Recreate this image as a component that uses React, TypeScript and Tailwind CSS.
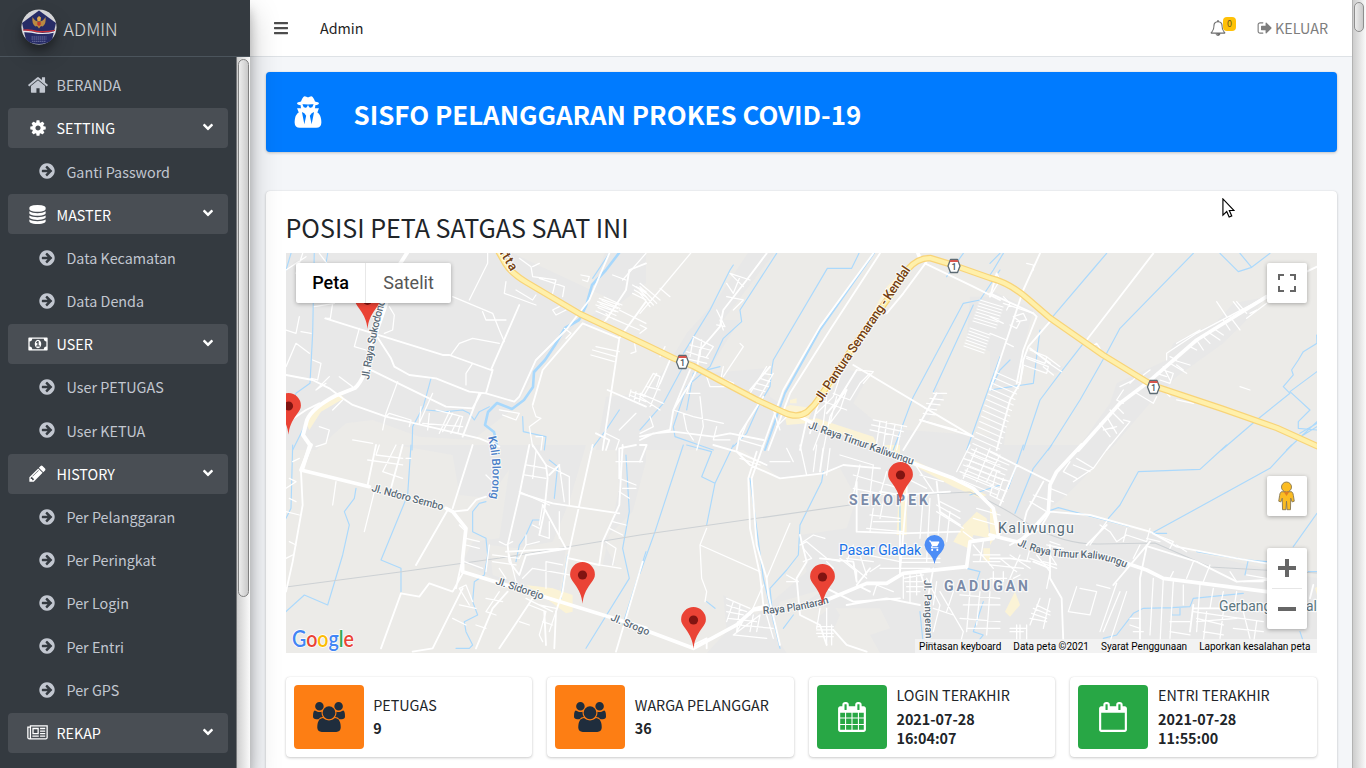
import React from "react";
import { FaAngleDown, FaBars } from "react-icons/fa";

const CALENDAR_FRAME =
  "m384-64v1280q0 52-38 90t-90 38h-1408q-52 0-90-38t-38-90v-1280q0-52 38-90t90-38h128v-96q0-66 47-113t113-47h64q66 0 113 47t47 113v96h384v-96q0-66 47-113t113-47h64q66 0 113 47t47 113v96h128q52 0 90 38t38 90z";

const ICONS = {
  home: "M1472 992v480q0 26-19 45t-45 19h-384v-384h-256v384h-384q-26 0-45-19t-19-45v-480q0-1 .5-3t.5-3l575-474 575 474q1 2 1 6zm223-69l-62 74q-8 9-21 11h-3q-13 0-21-7l-692-577-692 577q-12 8-24 7-13-2-21-11l-62-74q-8-10-7-23.5t11-21.5l719-599q32-26 76-26t76 26l244 204v-195q0-14 9-23t23-9h192q14 0 23 9t9 23v408l219 182q10 8 11 21.5t-7 23.5z",
  cog: "M1152 896q0-106-75-181t-181-75-181 75-75 181 75 181 181 75 181-75 75-181zm512-109v222q0 12-8 23t-20 13l-185 28q-19 54-39 91 35 50 107 138 10 12 10 25t-9 23q-27 37-99 108t-94 71q-12 0-26-9l-138-108q-44 23-91 38-16 136-29 186-7 28-36 28h-222q-14 0-24.5-8.5t-11.5-21.5l-28-184q-49-16-90-37l-141 107q-10 9-25 9-14 0-25-11-126-114-165-168-7-10-7-23 0-12 8-23 15-21 51-66.5t54-70.5q-27-50-41-99l-183-27q-13-2-21-12.5t-8-23.5v-222q0-12 8-23t19-13l186-28q14-46 39-92-40-57-107-138-10-12-10-24 0-10 9-23 26-36 98.5-107.5t94.5-71.5q13 0 26 10l138 107q44-23 91-38 16-136 29-186 7-28 36-28h222q14 0 24.5 8.5t11.5 21.5l28 184q49 16 90 37l142-107q9-9 24-9 13 0 25 10 129 119 165 170 7 8 7 22 0 12-8 23-15 21-51 66.5t-54 70.5q26 50 41 98l183 28q13 2 21 12.5t8 23.5z",
  database:
    "M896 768q237 0 443-43t325-127v170q0 69-103 128t-280 93.5-385 34.5-385-34.5-280-93.5-103-128v-170q119 84 325 127t443 43zm0 768q237 0 443-43t325-127v170q0 69-103 128t-280 93.5-385 34.5-385-34.5-280-93.5-103-128v-170q119 84 325 127t443 43zm0-384q237 0 443-43t325-127v170q0 69-103 128t-280 93.5-385 34.5-385-34.5-280-93.5-103-128v-170q119 84 325 127t443 43zm0-1152q208 0 385 34.5t280 93.5 103 128v128q0 69-103 128t-280 93.5-385 34.5-385-34.5-280-93.5-103-128v-128q0-69 103-128t280-93.5 385-34.5z",
  money:
    "M768 1152h384v-96h-128v-448h-114l-148 137 77 80q42-37 55-57h2v288h-128v96zm512-256q0 70-21 142t-59.5 134-101.5 101-138 39-138-39-101.5-101-59.5-134-21-142 21-142 59.5-134 101.5-101 138-39 138 39 101.5 101 59.5 134 21 142zm512 256v-512q-106 0-181-75t-75-181h-1152q0 106-75 181t-181 75v512q106 0 181 75t75 181h1152q0-106 75-181t181-75zm128-832v1152q0 26-19 45t-45 19h-1792q-26 0-45-19t-19-45v-1152q0-26 19-45t45-19h1792q26 0 45 19t19 45z",
  pencil:
    "M491 1536l91-91-235-235-91 91v107h128v128h107zm523-928q0-22-22-22-10 0-17 7l-542 542q-7 7-7 17 0 22 22 22 10 0 17-7l542-542q7-7 7-17zm-54-192l416 416-832 832h-416v-416zm683 96q0 53-37 90l-166 166-416-416 166-165q36-38 90-38 53 0 91 38l235 234q37 39 37 91z",
  newspaper:
    "M1024 512h-384v384h384v-384zm128 640v128h-640v-128h640zm0-768v640h-640v-640h640zm640 768v128h-512v-128h512zm0-256v128h-512v-128h512zm0-256v128h-512v-128h512zm0-256v128h-512v-128h512zm-1536 960v-960h-128v960q0 26 19 45t45 19 45-19 19-45zm1664 0v-1088h-1536v1088q0 33-11 64h1483q26 0 45-19t19-45zm128-1216v1216q0 80-56 136t-136 56h-1664q-80 0-136-56t-56-136v-1088h256v-128h1792z",
  arrow:
    "M1413 896q0-27-18-45l-91-91-362-362q-18-18-45-18t-45 18l-91 91q-18 18-18 45t18 45l189 189h-502q-26 0-45 19t-19 45v128q0 26 19 45t45 19h502l-189 189q-19 19-19 45t19 45l91 91q18 18 45 18t45-18l362-362 91-91q18-18 18-45zm251 0q0 209-103 385.5t-279.5 279.5-385.5 103-385.5-103-279.5-279.5-103-385.5 103-385.5 279.5-279.5 385.5-103 385.5 103 279.5 279.5 103 385.5z",
  bell: "M912 1696q0-16-16-16-59 0-101.5-42.5t-42.5-101.5q0-16-16-16t-16 16q0 73 51.5 124.5t124.5 51.5q16 0 16-16zm-666-288h1300q-266-300-266-832 0-51-24-105t-69-103-121.5-80.5-169.5-31.5-169.5 31.5-121.5 80.5-69 103-24 105q0 532-266 832zm1482 0q0 52-38 90t-90 38h-448q0 106-75 181t-181 75-181-75-75-181h-448q-52 0-90-38t-38-90q50-42 91-88t85-119.5 74.5-158.5 50-206 19.5-260q0-152 117-282.5t307-158.5q-8-19-8-39 0-40 28-68t68-28 68 28 28 68q0 20-8 39 190 28 307 158.5t117 282.5q0 139 19.5 260t50 206 74.5 158.5 85 119.5 91 88z",
  signOut:
    "M704 1440q0 4 1 20t.5 26.5-3 23.5-10 19.5-20.5 6.5h-320q-119 0-203.5-84.5t-84.5-203.5v-704q0-119 84.5-203.5t203.5-84.5h320q13 0 22.5 9.5t9.5 22.5q0 4 1 20t.5 26.5-3 23.5-10 19.5-20.5 6.5h-320q-66 0-113 47t-47 113v704q0 66 47 113t113 47h312l11.5 1 11.5 3 8 5.5 7 9 2 13.5zm928-544q0 26-19 45l-544 544q-19 19-45 19t-45-19-19-45v-288h-448q-26 0-45-19t-19-45v-384q0-26 19-45t45-19h448v-288q0-26 19-45t45-19 45 19l544 544q19 19 19 45z",
  users:
    "M529 896q-162 5-265 128h-134q-82 0-138-40.5t-56-118.5q0-353 124-353 6 0 43.5 21t97.5 42.5 119 21.5q67 0 133-23-5 37-5 66 0 139 81 256zm1071 637q0 120-73 189.5t-194 69.5h-874q-121 0-194-69.5t-73-189.5q0-53 3.5-103.5t14-109 26.5-108.5 43-97.5 62-81 85.5-53.5 111.5-20q10 0 43 21.5t73 48 107 48 135 21.5 135-21.5 107-48 73-48 43-21.5q61 0 111.5 20t85.5 53.5 62 81 43 97.5 26.5 108.5 14 109 3.5 103.5zm-1024-1277q0 106-75 181t-181 75-181-75-75-181 75-181 181-75 181 75 75 181zm704 384q0 159-112.5 271.5t-271.5 112.5-271.5-112.5-112.5-271.5 112.5-271.5 271.5-112.5 271.5 112.5 112.5 271.5zm576 225q0 78-56 118.5t-138 40.5h-134q-103-123-265-128 81-117 81-256 0-29-5-66 66 23 133 23 59 0 119-21.5t97.5-42.5 43.5-21q124 0 124 353zm-128-609q0 106-75 181t-181 75-181-75-75-181 75-181 181-75 181 75 75 181z",
  agent:
    "M704 1536l96-448-96-128-128-64zM1088 1536l128-640-128 64-96 128zM1184 496q-2-4-4-6-10-8-96-8-70 0-167 19-7 2-21 2t-21-2q-97-19-167-19-86 0-96 8-2 2-4 6 2 18 4 27 2 3 7.500 6.500t7.500 10.500q2 4 7.500 20.500t7 20.500 7.500 17 8.500 17 9 14 12 13.500 14 9.500 17.500 8 20.500 4 24.500 2q36 0 59-12.500t32.500-30 14.500-34.500 11.500-29.500 17.500-12.500h12q11 0 17.500 12.500t11.500 29.500 14.500 34.500 32.500 30 59 12.500q13 0 24.500-2t20.500-4 17.500-8 14-9.500 12-13.500 9-14 8.500-17 7.500-17 7-20.500 7.500-20.500q2-7 7.500-10.500t7.500-6.500q2-9 4-27zM1600 1467q0 121-73 190t-194 69h-874q-121 0-194-69t-73-190q0-61 4.500-118t19-125.500 37.500-123.500 63.500-103.500 93.500-74.500l-90-220h214q-22-64-22-128 0-12 2-32-194-40-194-96 0-57 210-99 17-62 51.500-134t70.500-114q32-37 76-37 30 0 84 31t84 31 84-31 84-31q44 0 76 37 36 42 70.500 114t51.500 134q210 42 210 99 0 56-194 96 7 81-20 160h214l-82 225q63 33 107.500 96.500t65.500 143.500 29 151.500 8 148.500z",
  calendar:
    "M192 1664h288v-288h-288v288zm352 0h320v-288h-320v288zm-352-352h288v-320h-288v320zm352 0h320v-320h-320v320zm-352-384h288v-288h-288v288zm736 736h320v-288h-320v288zm-384-736h320v-288h-320v288zm768 736h288v-288h-288v288zm-384-352h320v-320h-320v320zm-352-864v-288q0-13-9.5-22.5t-22.5-9.5h-64q-13 0-22.5 9.5t-9.5 22.5v288q0 13 9.5 22.5t22.5 9.5h64q13 0 22.5-9.5t9.5-22.5zm736 864h288v-320h-288v320zm-384-384h320v-288h-320v288zm384 0h288v-288h-288v288zm32-480v-288q0-13-9.5-22.5t-22.5-9.5h-64q-13 0-22.5 9.5t-9.5 22.5v288q0 13 9.5 22.5t22.5 9.5h64q13 0 22.5-9.5t9.5-22.5z" +
    CALENDAR_FRAME,
  calendarEmpty:
    "M192 1664h1408v-1024h-1408v1024zm384-1216v-288q0-14-9-23t-23-9h-64q-14 0-23 9t-9 23v288q0 14 9 23t23 9h64q14 0 23-9t9-23zm768 0v-288q0-14-9-23t-23-9h-64q-14 0-23 9t-9 23v288q0 14 9 23t23 9h64q14 0 23-9t9-23z" +
    CALENDAR_FRAME,
};

type IconName = keyof typeof ICONS;

function Icon({ name, className, box = "0 0 1792 1792" }: { name: IconName; className: string; box?: string }) {
  return (
    <svg viewBox={box} className={className} fill="currentColor" aria-hidden="true">
      <path d={ICONS[name]} fillRule={name === "agent" ? "evenodd" : "nonzero"} />
    </svg>
  );
}

type MenuGroup = { label: string; icon: IconName; box?: string; size: string; items: string[] };

const MENU: MenuGroup[] = [
  { label: "SETTING", icon: "cog", size: "size-[18px]", items: ["Ganti Password"] },
  { label: "MASTER", icon: "database", size: "size-[19px]", items: ["Data Kecamatan", "Data Denda"] },
  { label: "USER", icon: "money", box: "0 0 1920 1792", size: "w-5 h-[18px]", items: ["User PETUGAS", "User KETUA"] },
  {
    label: "HISTORY",
    icon: "pencil",
    size: "size-[19px]",
    items: ["Per Pelanggaran", "Per Peringkat", "Per Login", "Per Entri", "Per GPS"],
  },
  { label: "REKAP", icon: "newspaper", box: "0 0 2048 1792", size: "w-[21px] h-[18px]", items: [""] },
];

function Emblem() {
  return (
    <svg viewBox="0 0 36 36" className="size-9 shrink-0 rounded-full shadow-[0_10px_20px_rgba(0,0,0,0.19),0_6px_6px_rgba(0,0,0,0.23)]">
      <circle cx="18" cy="18" r="17.6" fill="#d4d4d6" />
      <path d="M18 1.500 35 14l-4 17q-5 4-13 4T5 31L1 14Z" fill="#272c66" />
      <path d="M11.500 8q2.500 4.500 6.500 4.500t6.500-4.500q1 7-3 9.500l-1.500-.6L18 19.500l-2-2.600-1.500.6q-4-2.500-3-9.500Z" fill="#b98a42" />
      <path d="M18 7l2 1.500-.5 3.500h-3l-.5-3Z" fill="#e0a94a" />
      <path d="m16.300 13h3.400v2.500l-1.700 1.700-1.700-1.700Z" fill="#c0392b" />
      <path d="M2 20.500q7-1 14 1.200 9 1 18-1v1.300q-8 2-17 1.400-8-2-15-1.600Z" fill="#c8303a" />
      <path d="M2 21.800q7-.4 14 1.800 9 1 18-1.300v1.200q-8 2-17 1.400-8-2-15-1.600Z" fill="#e8e8ee" />
      <path d="M10.500 28h15M10.500 30h15M11 32.300h14" stroke="#6d71a0" strokeWidth="1" strokeDasharray="1.500 .5" />
    </svg>
  );
}

function Sidebar() {
  return (
    <aside className="z-20 flex h-full w-[250px] shrink-0 flex-col overflow-hidden bg-[#343a40] shadow-[0_14px_28px_rgba(0,0,0,0.25),0_10px_10px_rgba(0,0,0,0.22)]">
      <div className="flex h-[57px] shrink-0 items-center gap-[7px] border-b border-[#4b545c] bg-[#343a40] pb-[3px] pl-[20.600px]">
        <Emblem />
        <span className="pt-0.5 text-[17.900px] font-light leading-6 text-white/80">ADMIN</span>
      </div>
      <div className="flex min-h-0 flex-1">
        <nav className="w-[236px] overflow-hidden px-2 pt-[7.900px] text-[14.330px] text-[#c2c7d0]">
          <div className="mb-[3.200px] flex h-10 items-center">
            <span className="ml-[18.500px] flex w-[22px] justify-center">
              <Icon name="home" className="size-[22px]" />
            </span>
            <span className="ml-2">BERANDA</span>
          </div>
          {MENU.map((group) => (
            <div key={group.label}>
              <div className="mb-[3.200px] flex h-10 items-center rounded bg-[#494e54] text-white">
                <span className="ml-[18.500px] flex w-[22px] justify-center">
                  <Icon name={group.icon} box={group.box} className={group.size} />
                </span>
                <span className="ml-2 flex-1">{group.label}</span>
                <FaAngleDown className="mb-0.5 mr-3 size-4" />
              </div>
              {group.items.map((item) => (
                <div key={item} className="mb-[3.200px] flex h-10 items-center">
                  <Icon name="arrow" className="ml-[30px] size-[18px]" />
                  <span className="ml-[10.500px]">{item}</span>
                </div>
              ))}
            </div>
          ))}
        </nav>
        <div className="w-3.5 border-l border-[#77797c] bg-linear-to-r from-[#cfcfcf] to-[#fafafa] px-px pt-0.5">
          <div className="h-[538px] w-[11px] rounded-full border border-[#808080] bg-linear-to-r from-[#ededed] to-[#c9c9c9]" />
        </div>
      </div>
    </aside>
  );
}

function Navbar() {
  return (
    <header className="flex h-[57px] shrink-0 items-center border-b border-[#dee2e6] bg-white text-[14.330px]">
      <FaBars className="ml-[23px] size-4 text-[#4d4d4d]" />
      <span className="ml-[31px] text-[#1f1f1f]">Admin</span>
      <div className="ml-auto mr-6 flex items-center text-[#7d7d7d]">
        <div className="relative mr-[31px]">
          <Icon name="bell" className="size-4 text-[#6f6f6f]" />
          <span className="absolute -top-[3px] left-[13px] flex h-3.5 w-[13px] items-center justify-center rounded bg-[#ffc107] text-[9px] text-[#6b5a1c]">
            0
          </span>
        </div>
        <Icon name="signOut" className="mr-0.5 size-4" />
        <span>KELUAR</span>
      </div>
    </header>
  );
}

/* Map drawing. Each sheet is surveyed in thirds of a pixel from its own origin. */
type Sheet = { x: number; y: number; town: string; water: string; minor: string; local: string; major: string; shop: string };

const SHEETS: Sheet[] = [
  {
    x: 286,
    y: 250,
    town: "M0 0H660L1000 160 880 210 740 380 690 470 560 570 400 560 260 510 180 520 90 600H0ZM900 240 1080 100V0H960L890 180ZM960 440 1080 430V600H930Z",
    shop: "M60 520 75 480 160 430 175 445 105 485 70 540Z",
    water:
      "M85 0 80 250 72 400 30 430 0 520M435 385 412 470 380 530 378 600M420 480 480 485 530 480 550 490 565 510 580 485 610 470M970 10 920 85M710 500 712 545 780 560 775 600M1000 480 960 540 915 600M60 520 20 600M0 60 15 10M125 10 120 40",
    minor:
      "M50 10 30 70M100 10 130 50M0 60 60 20M140 160 133 205 118 205M85 170 145 160M0 240 30 250 40 200M45 245 75 250M0 350 30 280 70 310M80 330 105 340 95 390 75 385M220 235 205 290 240 300M500 140 620 190 640 240 655 275M605 10V40L550 150M590 185 600 210 660 210M660 95 655 130 750 165M690 120 740 150 750 135M700 25 735 50 740 80 810 90 800 130M740 50 760 40M760 85 835 110 830 140M495 315 520 280 560 265 640 280M540 405 540 370 560 340M335 395 300 490 290 540M310 170 325 195 320 240 295 250M130 380 90 420 120 400M160 380 200 410M170 450 140 480M100 530 130 540 120 580 90 590M200 570 260 580M300 500 310 490 375 510 370 530M440 430 400 520M430 490 425 540M450 480 530 500 515 550M490 485 460 550M500 490 470 545M520 500 495 550M410 520 530 530M885 75 910 80 905 95 890 90M820 170 800 180 810 195 840 180M835 235 855 250 840 265M980 75 1020 90M1080 10 1010 90M1000 180 1080 220M980 205 1060 240M1040 105 1080 130M920 300 990 320M915 315 985 335M930 290 1000 305M640 480 700 490 690 510 650 495M740 470 750 500 765 505 730 530 740 590M750 560 770 560 765 600M960 550 1000 570 990 600M1050 490 1000 540M940 145 1000 165M935 155 995 175M930 165 990 185M1050 110 1080 125M1045 120 1080 140M1040 130 1080 150M1035 425 1080 440M1030 435 1080 455M1035 420 1030 440M1050 425 1045 450M1065 430 1060 455M405 470 400 520M960 190 970 200 950 220M1045 275 1050 305 1035 310",
    local:
      "M118 205 245 245 470 315 490 315 615 360 700 165M270 255 315 325 325 350 370 375 450 385 550 425 600 430 685 455M600 430 620 360M245 355 480 470 560 475 585 430M0 375 80 390 130 415 170 445 200 465 300 500 580 565 640 590M580 430 530 560M1080 155 1000 265 950 600M970 10 910 150 840 240 750 330 700 440 685 455M890 220 830 290 770 360 740 465M890 220 1000 265M965 420 1080 470M0 520 60 480 100 460M930 550 970 570 960 600M1080 40 1030 60 1020 120 960 210",
    major: "",
  },
  {
    x: 640,
    y: 250,
    town: "M330 0 410 0 250 210 300 210 200 370 380 355 390 440 480 500 520 480 620 360 690 370 640 460 700 510 800 540 1080 560V600H0V440L80 350 140 250 230 150ZM990 140 1080 140V320L980 270ZM840 510 890 410 910 440 860 520Z",
    shop: "M450 450 470 445 470 460 450 460ZM430 475 450 465 520 475 500 520 440 525ZM500 510 530 505 700 560 720 600 620 560ZM740 110 780 70 650 300 560 440 540 420 680 220Z",
    water:
      "M280 45 270 60 210 180 130 310M140 330 70 460 0 540M140 480 160 370 240 350M410 10 300 180 305 215 250 265 210 350 140 410 100 530 105 560 220 600M657 10 635 55 562 55 400 330 395 360 390 410 360 460 320 550 280 590M1080 60 1020 150 970 160 820 440 760 600M1000 165 880 425M1080 320 980 600M1080 10 1050 40M970 10 920 80",
    minor:
      "M160 0 60 120 0 190M60 115 90 140M330 90 270 70 310 110M300 80 280 130 260 100M260 140 310 150 280 180M230 180 255 230 230 225M240 210 250 240M160 260 220 290 200 320M150 285 210 300M140 305 205 325M135 325 200 340M160 265 150 320M185 270 180 320M0 100 60 150M0 110 50 160M0 120 40 165M0 130 30 170M40 370 0 440 60 480M50 370 10 440M60 400 30 470M40 370 60 380 50 410M20 410 60 420M0 430 70 460M300 280 310 290 250 380M250 350 240 400M200 380 210 410 270 410M380 350 330 430M400 370 360 440M370 370 395 375M360 385 390 395M350 400 385 410M340 415 375 425M180 430 140 430 150 400M100 480 160 500 250 520M130 490 140 540 160 570M180 440 190 530 170 600M230 530 220 570 270 570M320 520 300 570 370 590M440 500 410 530M400 480 420 540M690 370 660 400 630 450 580 430M650 360 700 365 670 400M540 450 620 480M560 440 550 520 520 600M590 440 570 520 600 480 620 420M600 380 580 440 530 490M620 410 570 500 550 600M700 510 800 530M695 525 790 545M690 540 780 560M720 515 710 580M740 515 730 590M765 525 750 600M785 530 770 600M880 430 920 430M870 445 910 450M860 460 900 465M855 475 890 480M850 490 885 495M840 510 950 540M0 225 20 235 0 250M75 290 60 320M30 500 40 530 0 550",
    local:
      "M380 10 320 90 250 180 240 230 180 300 170 360 150 400 100 480 90 540 0 560M150 360 100 480M700 10 540 230 430 420 365 600M720 10 570 240 450 430 385 600M860 35 790 130 740 190M855 40 1000 110 1080 150M640 345 1000 560M0 570 40 550 100 545 220 560 270 550 370 570M500 510 480 600M540 440 510 550M200 370 280 400M650 360 600 440M560 490 620 420M390 350 330 420M370 440 300 550 290 600M890 430 840 520 790 600M840 510 1000 560M90 330 60 400",
    major: "M830 0 840 25M480 500 520 520",
  },
  {
    x: 990,
    y: 250,
    town: "M360 460 380 400 530 330 550 280 680 215 730 160 830 140 770 210 700 280 560 380 480 460 360 600H260ZM0 120 130 180 100 300 220 350 200 370 100 350 60 440 40 600H0Z",
    shop: "",
    water:
      "M350 10 320 45 180 210M150 240 130 400 0 420M280 280 210 370 150 450 100 600M610 10 390 235 350 310 270 450 175 600M690 10 745 65 785 52 840 10M750 10 785 52M980 255 981 280 940 305 925 330 905 360 910 375 880 410 900 430 800 510 695 600M981 365 900 425 960 480 925 515 925 535 981 540M981 515 890 600M981 520 930 550M981 530 940 555M40 10 10 60 0 75M60 330 30 360 0 420",
    minor:
      "M110 40 130 45 130 60M20 70 30 90 0 140M0 200 40 220M40 140 60 160 50 180M60 225 80 235 90 215 70 200 100 190 110 210 80 215M120 300 170 320 165 340 110 320M110 325 175 350 170 370 100 345M170 320 210 350M170 335 215 365M160 350 190 375M305 290 320 280 330 295M680 155 710 200M530 330 530 310 620 250 830 140M560 280 630 240M540 320 560 330M600 290 620 300M620 270 640 300M640 260 660 280M660 250 690 270M670 235 700 255M700 210 720 240M720 200 750 240M730 155 750 180M740 155 770 190M770 205 830 160M780 190 800 180M510 390 540 400 550 370 520 360M540 340 590 370M550 330 600 345M520 350 540 390M500 370 530 380M560 345 580 360M390 410 430 390M400 420 380 450 400 460M440 430 490 460 500 440M420 400 440 380M460 375 480 360M520 420 540 440M560 450 610 460M330 520 360 560M350 500 380 550M400 510 420 515 350 600M360 480 400 520M380 470 400 490M340 540 380 530M750 410 780 420M40 160 130 190M100 350 90 400M0 250 50 270M50 280 70 290",
    local:
      "M150 10 100 120 40 300 0 420M490 10 290 270M180 215 115 290 100 330 90 400 60 450 20 600M130 190 140 200 100 300 80 400M20 70 0 140M0 130 130 190M120 295 180 340M950 65 981 50",
    major: "M830 140 620 270 470 400 390 460 265 600",
  },
  {
    x: 286,
    y: 445,
    town: "M330 0H700V30L610 160 520 150 500 30ZM680 0 900 0 850 170 800 290 690 310 610 300 620 390 680 410 720 330 840 310 820 440 740 430 620 400 530 350 560 290 640 280ZM990 0H1080V50L1040 200 950 290 990 360 950 360 1000 130Z",
    shop: "M720 420 800 430 860 450 860 500 840 505 780 460Z",
    water:
      "M20 0 15 190 0 220M210 130 205 160 175 200 190 240 170 330 125 480 55 450 0 500M375 0 365 150 285 345 345 370 345 440M600 170 580 175 560 200 560 260 600 280 605 330 595 390 565 410 560 470 575 510 535 530 540 560 560 600 550 610 510 610M790 45 815 65 805 160M760 225 740 225 720 270 700 300 690 350M1020 30 1030 200 1010 310 1030 400 900 610M1080 320 1010 540M845 330 825 460",
    minor:
      "M20 50 40 40M10 100 30 110 0 130M10 160 30 170M0 200 40 210M10 290 30 300M20 330 0 340M150 110 140 180M265 140 235 260M280 0 270 30 350 40M245 45 350 60M330 0 290 80 350 100M375 40 360 40M600 90 620 110M540 280 580 290M540 300 580 310M540 260 520 240M535 350 590 370M610 300 600 380M640 290 660 300 680 290M620 330 700 340M620 350 690 360M640 370 660 400M670 330 690 410M700 340 720 300 760 290M720 60 780 70M715 90 780 100M700 140 790 180M750 20 740 100M770 180 760 240M790 230 790 280 760 270M820 200 820 280M780 60 850 95 850 180M780 350 830 360M740 370 850 390M780 350 780 430M710 400 740 370M990 50 1070 50M1000 100 1050 120M1000 140 1030 160M1010 130 1050 130M970 250 1010 270M980 230 1020 240M960 290 990 310 980 360M940 360 1005 370M550 480 520 430 540 420 560 470M520 480 570 490M500 520 540 540M600 460 650 470M600 500 630 510M570 540 600 550M640 440 600 500M720 460 800 500M730 480 780 500M760 480 810 490M780 500 760 570 770 590M810 500 790 560M700 530 730 540M770 530 800 540M720 300 720 270M740 240 760 250M835 170 820 60",
    local:
      "M45 80 50 180 20 350 0 440M270 0 245 120M350 0 315 130M560 0 500 190M485 195 390 360M510 430 530 340M500 200 545 195 570 165 600 155M730 0 700 150 665 300 670 350 700 390M740 0 780 60 785 100 775 200 760 270M920 0 880 180 845 340 830 440 810 500 805 610M705 145 800 175 1000 205M820 60 790 90M770 180 840 310 660 320M700 390 720 330 850 310M1010 0 1000 180 950 290M1050 0 1000 10 1000 100M950 290 940 360 850 340M530 385 500 440 430 415 400 455 345 445 285 610M530 430 480 530 440 610 380 620M665 440 620 490 570 610M740 460 640 610M775 500 780 600M1070 350 990 620",
    major: "M75 0 45 75 250 125M480 190 500 200 540 250 530 340 530 380 1080 550",
  },
  {
    x: 640,
    y: 445,
    town: "M290 0H1080V624H720L690 570 750 550 720 490 600 490 480 480 560 430 420 470 400 560 440 624H200L260 560 250 450 350 510 500 380 480 270 620 250 650 160 600 70 520 90 420 100 370 60ZM580 480 600 510 560 600 530 520Z",
    shop: "M780 70 800 80 800 270 770 270ZM800 50 820 45 1040 150 1020 160 940 125ZM970 240 1010 200 1040 220 1050 280 1000 270 985 310 940 290ZM1030 310 1060 310 1050 350 1030 345ZM730 0H780V30Z",
    water:
      "M130 0 45 260 0 385M140 0 215 20 185 95 225 115M280 0 225 115 200 240M550 80 545 110 480 240 475 330 440 375 390 430 400 530 410 560M330 100 370 400 420 610M780 80V360M200 470 225 490M460 510 430 550M840 500 850 600M1030 470 1000 560 1030 570 990 620M1080 120 990 150M980 370 1020 380 1010 410",
    minor:
      "M300 40 360 60M440 10 460 50M480 0 500 90M530 0 520 80M570 10 560 90M390 50 450 50M600 30 700 60M640 90 780 130M640 130 740 150M660 60 640 150M700 60 690 150M740 80 720 150M840 90 910 110M820 50 880 140M800 100 860 130M850 150 840 280M870 160 860 350M890 180 960 220M890 200 970 250M900 210 890 320M930 200 920 290M690 210 780 220M700 190 690 260M700 230H780M680 250 790 260M490 290 520 270 555 280M490 310 515 340 490 350M480 300 500 290 560 340 600 350M440 390 475 410M440 410 470 410M560 350 580 370M600 340 650 380 650 410M620 340 700 350M640 300 620 350 680 400M660 330 680 390M690 380 720 360M720 370H870M780 340H900M780 352H900M790 400 850 390M795 410H850M800 425H850M800 440H840M790 390V460M810 390V470M830 390V450M680 330 780 350M260 480 320 500M260 500 310 510M265 520 350 530M260 460 330 490M280 470 260 530M300 480 290 560M320 510 290 560M340 510 330 560M360 510 350 560M380 510 400 580M290 540 400 550M280 570 380 580M540 490 530 550M560 490 560 550M530 545H580M530 555H580M530 565H580M535 575H580M560 550V600M575 540V600M180 300 360 380M450 235 380 400M370 420 330 510M200 250 180 300 185 400 200 440 195 470M360 510 280 570M860 400 900 480 880 560M890 410 880 480M900 440 970 560 960 600M940 440 920 500M880 490 940 510M960 450 1080 460M970 480H1080M990 440 980 560M1020 440 1010 540M1050 440 1040 570M960 520 1080 530M980 550H1080M980 20 1080 60M970 40 1080 80M970 60 1080 100M960 80 1060 120M900 170 960 200M970 260 1010 290M1010 190 1080 210M1000 220 1070 240M990 0 950 80M1010 10 970 100M1050 10 1010 110M1080 30 1040 110M1000 300 1060 370M1030 290 1020 350M1000 330H1080M1000 350H1080M730 170 720 220M760 440 710 420 700 450",
    local:
      "M370 0 335 100 350 300 380 400 385 450 420 600M350 20 325 100 330 250 360 390 370 480M220 0 290 20 330 60 420 100 550 85 610 60 720 70M200 610 200 580 160 600M0 0H20L0 50M340 490 380 480 400 510M480 270 500 350 470 400 480 510 540 540 560 600M540 340 640 350 650 410M650 110 650 260 790 265 960 260M720 140 780 150 930 140M800 90 800 150 780 380M780 260V390M840 380 850 410M980 370 990 290 1060 280M620 480 740 460 840 480M560 430 640 470 780 460M580 555 620 600 680 620M690 370 650 420 690 440M550 10 540 80M380 60 290 20M880 370 860 480M890 110 900 200 960 240",
    major:
      "M700 10 820 55 940 100 1000 130 1060 190 1075 270M0 550 160 610 290 540 340 495 370 490M560 465 680 415 740 415 790 385 980 365 990 290 1060 280",
  },
  {
    x: 990,
    y: 445,
    town: "M0 0H360L310 70 230 150 180 190 350 230 420 250 530 280 600 320 780 360 981 400V630H0Z",
    shop: "M0 190 20 200 25 260 0 300ZM75 440 90 480 60 515 45 500ZM975 430 981 425V450Z",
    water:
      "M100 0 55 130M185 0 130 70 75 205M170 200 205 188 420 245M710 0 630 73 445 80 390 180 355 220M905 0 840 70 485 265 530 265M981 205 910 305M620 320 830 355M981 380H955M765 390 775 345 830 350M340 580 380 570 430 505 460 490 545 488 600 485 610 460 760 445M570 490 570 510 545 510 545 490M930 560 940 590",
    minor:
      "M0 90 60 110M0 120 50 140M0 150 40 170M20 80 0 150M40 100 20 160M60 110 30 180M360 0 310 70 250 110M240 50 220 80 260 100M260 40 310 70M180 130 230 150M120 170 170 200M130 150 190 170M250 60 300 80M350 230 300 300M330 240 360 260 380 290 410 270M410 250 400 290M410 270 470 290 480 250M470 280 510 290M500 270 550 290 540 310M560 300 590 320M660 360 640 410M610 350 590 400M550 380 540 400M720 380 740 410M770 390 830 400M820 410 760 410M450 300 430 340M270 430 320 440 300 510 235 500 260 425M320 420 360 430M380 415 330 560M390 440 340 560M410 440 360 590M140 480 180 500M130 490 180 510M125 505 170 520M120 520 170 530M150 460 120 540M180 460 160 550M60 550 110 550M60 560 100 560M80 540V600M90 540V600M110 540V590M160 350 200 360 180 330M120 340 200 370M0 360 100 370M30 340 80 380M60 330 120 370M90 330 60 400M170 300 220 310M180 290 210 300M140 330 180 380M120 310 110 350M180 380 170 430M420 540 450 550M420 520 450 520M430 560 460 560M490 400 480 570M520 400 510 600M550 410 540 580M580 420V480M630 420 620 560M670 430 660 490M700 440 690 490M740 440 730 500M540 530 600 530M540 560 600 570M610 500 820 530M620 520 700 540M620 530 740 520M650 500 640 590M700 500 690 580M760 500 780 580M800 530 790 600M730 550 820 560M640 560 700 570M0 400 50 400M10 380V420M40 380V410M70 400 90 390",
    local:
      "M0 20 180 110M80 60 30 180M0 340 60 340 120 350M60 300 150 250 180 200 300 210 480 260 560 305 740 340 830 355M180 300 180 400 215 460 220 590M470 305 450 400 450 590M475 305 620 350 740 410 830 405M350 240 290 300M160 110 110 200 100 240M370 420 480 290M240 590 260 610M130 350 180 370M610 480 600 560M610 490 690 490M970 420 960 460",
    major: "M275 0 200 80 180 120 175 200 130 250 90 290M0 270 80 290M410 355 470 375 520 400 830 440",
  },
];

const HIGHWAY =
  "M496 247 505 263Q511 273 526 282L580 314 646 345 673 358 693 366 723 382 757 400 783 412Q797 419 807 412 815 405 820 397L853 347 887 300 907 270Q917 258 930 258L953 265 990 278Q1010 283 1028 299L1050 318 1103 355 1147 382 1160 388 1223 409 1277 428 1317 446";

const RIVER =
  "M619 253 606 270 592 285 586 306 579 320 565 328 555 345 545 360 534 372 533 387 524 400 512 409 497 403 488 412 485 425 494 432 497 445";

const FIELDS = [
  { x: 980, y: 300, n: 8, dx: -1, dy: 3, w: 23, h: 7 },
  { x: 970, y: 328, n: 7, dx: -1, dy: 3, w: 20, h: 7 },
  { x: 995, y: 372, n: 15, dx: -1.7, dy: 5.5, w: 25, h: 11 },
  { x: 973, y: 450, n: 7, dx: -2, dy: 5, w: 36, h: 15 },
  { x: 604, y: 297, n: 5, dx: -2, dy: 3.5, w: 18, h: 8 },
];

const PINS = [
  [367.500, 329],
  [288.500, 434.700],
  [582.500, 603.700],
  [693.500, 648.700],
  [822.500, 605.700],
  [900.500, 503.700],
];

const SHIELDS = [
  [682.500, 362],
  [954, 266],
  [1153.500, 387],
];

const ROAD_NAMES = [
  { id: "sukodono", d: "M369 380Q375 335 386 299", text: "Jl. Raya Sukodono", len: 81, size: 11, fill: "#5b6b78" },
  { id: "pantura", d: "M821 403.500 913 266.500", text: "Jl. Pantura Semarang - Kendal", len: 161, size: 13, fill: "#733f12" },
  { id: "jatta", d: "M497.500 249.500 514 277", text: "atta", len: 26, size: 13, fill: "#733f12" },
  { id: "timur1", d: "M808 428Q850 443 913 465", text: "Jl. Raya Timur Kaliwungu", len: 111, size: 10.500, fill: "#5b6b78" },
  { id: "timur2", d: "M1017 545Q1040 557 1080 558 1103 557 1128 569", text: "Jl. Raya Timur Kaliwungu", len: 112, size: 10.500, fill: "#5b6b78" },
  { id: "ndoro", d: "M371 491 445 511", text: "Jl. Ndoro Sembo", len: 74, size: 10.500, fill: "#5b6b78" },
  { id: "sidorejo", d: "M495 584 544 600", text: "Jl. Sidorejo", len: 50, size: 10.500, fill: "#5b6b78" },
  { id: "srogo", d: "M610 620 649 636", text: "Jl. Srogo", len: 41, size: 10.500, fill: "#5b6b78" },
  { id: "plantaran", d: "M763 614Q800 612 832 602", text: "Raya Plantaran", len: 67, size: 10.500, fill: "#5b6b78" },
  { id: "pangeran", d: "M924 580 926 652", text: "Jl. Pangeran D", len: 68, size: 10, fill: "#5b6b78" },
  { id: "blorong", d: "M488 437Q496 470 490 501", text: "Kali Blorong", len: 62, size: 11.500, fill: "#4a7fc8" },
];

function MapDrawing() {
  return (
    <svg viewBox="286 253 1031 400" className="block h-full w-full font-['Roboto',sans-serif]" fill="none" strokeLinejoin="round" strokeLinecap="round">
      <rect x="286" y="253" width="1031" height="400" fill="#ecebe8" />
      {SHEETS.map((s, i) => (
        <g key={i} transform={`translate(${s.x} ${s.y}) scale(.3333)`}>
          <path d={s.town} fill="#e8e8e8" />
          <path d={s.shop} fill="#fbf3d6" />
        </g>
      ))}
      {SHEETS.map((s, i) => (
        <g key={i} transform={`translate(${s.x} ${s.y}) scale(.3333)`}>
          <path d={s.water} stroke="#abd9fc" strokeWidth="3.500" />
        </g>
      ))}
      <path d={RIVER} stroke="#a8d8fc" strokeWidth="2.600" />
      <path d="M874 253 820 330 785 393 765 450" stroke="#abd9fc" strokeWidth="2" />
      <path d="M286 587 400 572 500 558 640 535 850 505M928 494 970 492Q1000 505 1030 525 1065 545 1100 544L1155 543 1210 567 1317 573" stroke="#cdd1d4" strokeWidth="1.100" />
      {SHEETS.map((s, i) => (
        <g key={i} transform={`translate(${s.x} ${s.y}) scale(.3333)`} stroke="#fff">
          <path d={s.minor} strokeWidth="3.800" />
          <path d={s.local} strokeWidth="5.500" />
          <path d={s.major} strokeWidth="11" />
        </g>
      ))}
      {FIELDS.map((f) =>
        Array.from({ length: f.n }, (_, k) => (
          <path key={`${f.x}-${f.y}-${k}`} d={`M${f.x + k * f.dx} ${f.y + k * f.dy}l${f.w} ${f.h}`} stroke="#fff" strokeWidth="1.200" />
        )),
      )}
      <path d="M407 253 398 267 384 310 370 350Q366 378 355 388L335 396Q312 408 307 420L303 435 310 445 302 470" stroke="#fff" strokeWidth="4" />
      <path d={HIGHWAY} stroke="#f8d479" strokeWidth="6.600" />
      <path d={HIGHWAY} stroke="#fff0aa" strokeWidth="4.200" />

      {SHIELDS.map(([x, y]) => (
        <g key={x} transform={`translate(${x} ${y})`}>
          <path d="M-3.500-6.500h7L6 0 3.500 6.500h-7L-6 0Z" fill="#fff" stroke="#5d6b73" strokeWidth="1.300" />
          <path d="M-3.500-6h7l1 2h-9Z" fill="#d8564e" />
          <text y="4" textAnchor="middle" fontSize="9" fontWeight="500" fill="#4a5960">
            1
          </text>
        </g>
      ))}

      {ROAD_NAMES.map((r) => (
        <g key={r.id}>
          <path id={r.id} d={r.d} />
          <text fontSize={r.size} fontWeight="500" fill={r.fill} stroke="#ffffffcc" strokeWidth="2" paintOrder="stroke" textLength={r.len}>
            <textPath href={`#${r.id}`} textLength={r.len}>
              {r.text}
            </textPath>
          </text>
        </g>
      ))}

      <g stroke="#ffffffcc" strokeWidth="2.500" paintOrder="stroke">
        <text x="849" y="505" fontSize="14" fontWeight="700" fill="#7b8ba8" textLength="79">
          SEKOPEK
        </text>
        <text x="944" y="591" fontSize="14" fontWeight="700" fill="#7b8ba8" textLength="84">
          GADUGAN
        </text>
        <text x="998" y="533" fontSize="14.300" fill="#566b78" textLength="76">
          Kaliwungu
        </text>
        <text x="839" y="555" fontSize="14" fill="#1a73e8" textLength="82" lengthAdjust="spacingAndGlyphs">
          Pasar Gladak
        </text>
        <text x="1219" y="611" fontSize="14" fill="#5c7680" textLength="98" lengthAdjust="spacingAndGlyphs">
          Gerbang Kendal
        </text>
      </g>

      <path d="M934.500 564Q933 557 928 552.500 925 549 924.500 545a10 10 0 0 1 20 0q-.5 4-3.500 7.500-5 4.500-6.500 11.500Z" fill="#4c8df6" />
      <path
        transform="translate(928.500 539.500) scale(.52)"
        d="M7 18a2 2 0 1 0 0 4 2 2 0 0 0 0-4zM1 2v2h2l3.600 7.590-1.350 2.450A2 2 0 0 0 7 17h12v-2H7.420l-.22-.37.9-1.630h7.450c.75 0 1.410-.41 1.750-1.030L21 5 20 4H5.210l-.94-2H1zm16 16a2 2 0 1 0 0 4 2 2 0 0 0 0-4z"
        fill="#fff"
      />

      {PINS.map(([x, y]) => (
        <g key={x} transform={`translate(${x} ${y})`}>
          <path d="M0 0C-.8-8-3-13-8-20-11-24-12.400-26-12.400-29.200a12.400 12.400 0 0 1 24.800 0C12.400-26 11-24 8-20 3-13 .8-8 0 0Z" fill="#ea4335" />
          <circle cy="-28.700" r="4.600" fill="#811411" />
        </g>
      ))}

      <text x="292" y="646.500" className="font-['Lato',sans-serif]" fontSize="22" fontWeight="600" textLength="62" lengthAdjust="spacingAndGlyphs" stroke="#fff" strokeWidth="1.500" paintOrder="stroke">
        <tspan fill="#4285f4">G</tspan>
        <tspan fill="#ea4335">o</tspan>
        <tspan fill="#fbbc04">o</tspan>
        <tspan fill="#4285f4">g</tspan>
        <tspan fill="#34a853">l</tspan>
        <tspan fill="#ea4335">e</tspan>
      </text>
    </svg>
  );
}

const CONTROL = "absolute rounded-xs bg-white shadow-[0_1px_4px_rgba(0,0,0,0.3)]";

function MapPanel() {
  return (
    <div className="relative h-[400px] w-full overflow-hidden font-['Roboto',sans-serif]">
      <MapDrawing />
      <div className={`${CONTROL} left-2.5 top-2.5 flex h-10 text-[18px] leading-10`}>
        <div className="w-[69px] text-center font-medium text-black">Peta</div>
        <div className="w-[86px] border-l border-[#e8e8e8] text-center text-[#565656]">Satelit</div>
      </div>
      <div className={`${CONTROL} right-2.5 top-2.5 flex size-10 items-center justify-center`}>
        <svg viewBox="0 0 18 18" className="size-[18px]" fill="#666">
          <path d="M0 0v6h2V2h4V0H0zm16 0h-4v2h4v4h2V0h-2zm0 16h-4v2h6v-6h-2v4zM2 12H0v6h6v-2H2v-4z" />
        </svg>
      </div>
      <div className={`${CONTROL} right-2.5 top-[223px] flex size-10 items-center justify-center pr-px`}>
        <svg viewBox="0 0 18 31" className="h-[30px] w-[17px]" fill="#fbbc22" stroke="#8b7b55" strokeWidth="1">
          <path d="M3.500 11h11q1.500 1 1.800 4l.9 6-2.200.8-1.500-4-.3 12.200H9.600L9 21l-.6 9H4.800l-.3-12.200-1.500 4L.8 21l.9-6q.3-3 1.800-4Z" />
          <circle cx="9" cy="6" r="5.300" />
          <path d="m6 11 3 4.500 3-4.500Z" fill="#e08020" stroke="none" />
        </svg>
      </div>
      <div className={`${CONTROL} right-2.5 top-[295px] flex h-[81px] w-10 flex-col items-center`}>
        <svg viewBox="0 0 40 81" className="h-[81px] w-10">
          <path d="M18 11h4v7h7v4h-7v7h-4v-7h-7v-4h7zM11 59h18v4H11z" fill="#666" />
          <path d="M5 40.500h30" stroke="#e6e6e6" />
        </svg>
      </div>
      <div className="absolute bottom-0 right-0 flex h-3.5 items-center gap-3 bg-[#f5f5f5]/75 pl-1 pr-[6.500px] pt-0.5 text-[10px] leading-[14px] text-black">
        <span>Pintasan keyboard</span>
        <span>Data peta ©2021</span>
        <span>Syarat Penggunaan</span>
        <span>Laporkan kesalahan peta</span>
      </div>
    </div>
  );
}

const STATS: { label: string; lines: string[]; icon: IconName; box?: string; tile: string; size: string }[] = [
  { label: "PETUGAS", lines: ["9"], icon: "users", box: "-64 0 1920 1792", tile: "w-[70px] bg-[#fd7e14] text-[#1f2d3d]", size: "w-8 h-[30px]" },
  { label: "WARGA PELANGGAR", lines: ["36"], icon: "users", box: "-64 0 1920 1792", tile: "w-[70px] bg-[#fd7e14] text-[#1f2d3d]", size: "w-8 h-[30px]" },
  { label: "LOGIN TERAKHIR", lines: ["2021-07-28", "16:04:07"], icon: "calendar", tile: "w-[70px] bg-[#28a745] text-white", size: "size-[30px]" },
  { label: "ENTRI TERAKHIR", lines: ["2021-07-28", "11:55:00"], icon: "calendarEmpty", tile: "w-[70px] bg-[#28a745] text-white", size: "size-[30px]" },
];

export default function App() {
  return (
    <div className="flex h-[768px] w-[1366px] overflow-hidden bg-[#f4f6f9] font-['Noto_Sans_CJK_SC',sans-serif] text-[#212529]">
      <Sidebar />
      <div className="flex min-w-0 flex-1 flex-col">
        <Navbar />
        <main className="min-h-0 flex-1 overflow-hidden pl-4 pr-[15px] pt-[15px]">
          <div className="flex h-20 items-center rounded bg-[#007bff] text-white shadow-[0_0_1px_rgba(0,0,0,0.125),0_1px_3px_rgba(0,0,0,0.2)]">
            <Icon name="agent" className="ml-[25px] size-[34px]" />
            <h1 className="ml-[28.500px] pt-1 text-[25.900px] font-bold leading-8">SISFO PELANGGARAN PROKES COVID-19</h1>
          </div>
          <section className="mt-[39px] h-[700px] rounded bg-white px-5 pt-[19px] shadow-[0_0_1px_rgba(0,0,0,0.125),0_1px_3px_rgba(0,0,0,0.2)]">
            <h2 className="-ml-[0.500px] mb-[9px] h-[34px] text-[25.070px] leading-[34px]">POSISI PETA SATGAS SAAT INI</h2>
            <MapPanel />
            <div className="-ml-[0.500px] mt-6 grid grid-cols-4 gap-[15px]">
              {STATS.map((s) => (
                <div
                  key={s.label}
                  className="flex h-20 items-stretch rounded bg-white p-2 shadow-[0_0_1px_rgba(0,0,0,0.125),0_1px_3px_rgba(0,0,0,0.2)]"
                >
                  <div className={`flex shrink-0 items-center justify-center rounded ${s.tile}`}>
                    <Icon name={s.icon} box={s.box} className={s.size} />
                  </div>
                  <div className="flex flex-col justify-center pb-0.5 pl-[9.700px] text-[14.330px] leading-[19px]">
                    <span className="mb-[4.600px] whitespace-nowrap">{s.label}</span>
                    {s.lines.map((line) => (
                      <b key={line}>{line}</b>
                    ))}
                  </div>
                </div>
              ))}
            </div>
          </section>
        </main>
      </div>
      <div className="w-3.5 shrink-0 border-l border-[#b3b3b3] bg-linear-to-r from-[#cdcdcd] to-[#fafafa] px-px pt-0.5">
        <div className="h-[30px] w-2.5 rounded-full border border-[#8f8f8f] bg-linear-to-r from-[#ededed] to-[#c9c9c9]" />
      </div>
      <svg viewBox="0 0 12 19" className="absolute left-[1222px] top-[198px] z-30 h-[20px] w-[13px]">
        <path d="M.7.900v15.300l3.600-3.400 2.300 5.300 2.500-1.100-2.300-5.100h4.500Z" fill="#fff" stroke="#000" strokeWidth="1.100" />
      </svg>
    </div>
  );
}
